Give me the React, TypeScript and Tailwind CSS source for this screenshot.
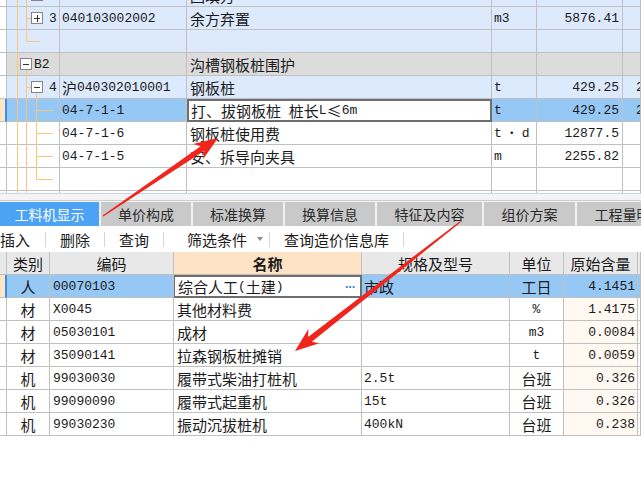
import React from "react";

const MONO = "font-['Liberation_Mono',monospace] text-[13px]";

function Txt({ s }: { s: string }) {
  const parts = s.split(/([\x20-\x7e]+)/).filter(Boolean);
  return (
    <>
      {parts.map((p, i) =>
        /^[\x20-\x7e]+$/.test(p) ? (
          <span key={i} className={`${MONO} whitespace-pre`}>
            {p}
          </span>
        ) : (
          <span key={i} className="text-[15px]">
            {p}
          </span>
        )
      )}
    </>
  );
}

type TreeProps = {
  lines: number[];
  half?: number;
  down?: number;
  hl?: [number, number];
  box?: { x: number; plus: boolean };
};

function Tree({ lines, half, down, hl, box }: TreeProps) {
  const o = "#fbc57a";
  return (
    <svg width="52" height="23" className="absolute left-0 top-0" shapeRendering="crispEdges">
      <line x1="0" y1="22.5" x2="52" y2="22.5" stroke="#c0c0c0" />
      {lines.map((x) => (
        <line key={x} x1={x} y1="0" x2={x} y2="23" stroke={o} />
      ))}
      {half !== undefined && <line x1={half} y1="0" x2={half} y2="11.5" stroke={o} />}
      {down !== undefined && <line x1={down} y1="16" x2={down} y2="23" stroke={o} />}
      {hl && <line x1={hl[0]} y1="11.5" x2={hl[1]} y2="11.5" stroke={o} />}
      {box && (
        <g>
          <rect x={box.x} y="5.5" width="11" height="11" fill="#fff" stroke="#858585" />
          <line x1={box.x + 2.5} y1="11.5" x2={box.x + 8.5} y2="11.5" stroke="#333" />
          {box.plus && <line x1={box.x + 5.5} y1="8" x2={box.x + 5.5} y2="15" stroke="#333" />}
        </g>
      )}
    </svg>
  );
}

type TopRowData = {
  bg: string;
  tree: TreeProps;
  label?: string;
  labelX?: string;
  code?: string;
  name?: string;
  unit?: React.ReactNode;
  qty?: string;
  extra?: string;
  sel?: boolean;
};

const BLUE = "bg-[#dde9fc]";
const topRows: TopRowData[] = [
  { bg: BLUE, tree: { lines: [10.5, 19.5], hl: [19.5, 24], box: { x: 24.5, plus: true } }, name: "回填方" },
  { bg: BLUE, tree: { lines: [10.5, 19.5], hl: [19.5, 24], box: { x: 24.5, plus: true } }, label: "3", labelX: "left-[42px]", code: "040103002002", name: "余方弃置", unit: <Txt s="m3" />, qty: "5876.41" },
  { bg: BLUE, tree: { lines: [10.5], half: 19.5, hl: [19.5, 33] } },
  { bg: "bg-[#dcdcdc]", tree: { lines: [10.5], hl: [10.5, 13.5], box: { x: 13.5, plus: false }, down: 19.5 }, label: "B2", labelX: "left-[27px]", name: "沟槽钢板桩围护" },
  { bg: BLUE, tree: { lines: [10.5, 19.5], hl: [19.5, 24], box: { x: 24.5, plus: false }, down: 29.5 }, label: "4", labelX: "left-[42px]", code: "沪040302010001", name: "钢板桩", unit: <Txt s="t" />, qty: "429.25", extra: "2" },
  { bg: "bg-[#96c8f5]", sel: true, tree: { lines: [10.5, 19.5, 29.5], hl: [29.5, 46] }, code: "04-7-1-1", name: "打、拔钢板桩 桩长L≤6m", unit: <Txt s="t" />, qty: "429.25", extra: "2" },
  { bg: "bg-white", tree: { lines: [10.5, 19.5, 29.5], hl: [29.5, 46] }, code: "04-7-1-6", name: "钢板桩使用费", unit: (<><span className={MONO}>t</span><span className="px-[4px] text-[12px]">·</span><span className={MONO}>d</span></>), qty: "12877.5" },
  { bg: "bg-white", tree: { lines: [10.5, 19.5, 29.5], hl: [29.5, 46] }, code: "04-7-1-5", name: "安、拆导向夹具", unit: <Txt s="m" />, qty: "2255.82" },
  { bg: "bg-white", tree: { lines: [10.5, 19.5], half: 29.5, hl: [29.5, 46] } },
  { bg: "bg-white", tree: { lines: [10.5, 19.5] } },
];

function TopRow({ r }: { r: TopRowData }) {
  const cell = "flex items-center overflow-hidden whitespace-nowrap border-r border-b border-[#c0c0c0]";
  return (
    <div className={`grid h-[23px] grid-cols-[7px_53px_127px_305px_45px_86px_1fr] ${r.bg}`}>
      <div className={r.sel ? "border-b border-r-2 border-[#c0c0c0] border-r-[#3b8ee5] bg-[#fde5c6]" : "border-b border-r border-[#c0c0c0] bg-white"} />
      <div className="relative border-r border-[#c0c0c0]">
        <Tree {...r.tree} />
        {r.label && (
          <span className={`absolute top-0 flex h-[22px] items-center ${r.labelX} ${MONO}`}>{r.label}</span>
        )}
      </div>
      <div className={`${cell} pl-[2px]`}>{r.code && <Txt s={r.code} />}</div>
      {r.sel ? (
        <div className="flex items-center overflow-hidden whitespace-nowrap border-2 border-[#6e6e6e] bg-white pl-[2px]">
          <Txt s={r.name ?? ""} />
        </div>
      ) : (
        <div className={`${cell} pl-[3px]`}>{r.name && <Txt s={r.name} />}</div>
      )}
      <div className={`${cell} pl-[2px]`}>{r.unit}</div>
      <div className={`${cell} justify-end pr-[3px]`}>{r.qty && <span className={MONO}>{r.qty}</span>}</div>
      <div className={`${cell} pl-[13px]`}>{r.extra && <span className={MONO}>{r.extra}</span>}</div>
    </div>
  );
}

const tabs = [
  { t: "工料机显示", w: "w-[99px]" },
  { t: "单价构成", w: "w-[90px]" },
  { t: "标准换算", w: "w-[90px]" },
  { t: "换算信息", w: "w-[90px]" },
  { t: "特征及内容", w: "w-[105px]" },
  { t: "组价方案", w: "w-[91px]" },
  { t: "工程量明细", w: "w-[105px]" },
];

function Tabs() {
  return (
    <div className="flex h-[24px] gap-[2px] overflow-hidden bg-[#f0f0f0]">
      {tabs.map((tab, i) => (
        <div
          key={tab.t}
          className={`flex shrink-0 items-center justify-center text-[14px] ${tab.w} ${
            i === 0 ? "bg-[#4ca2f4] text-white" : "bg-[#c9c9c9] text-[#2a2a2a]"
          }`}
        >
          {tab.t}
        </div>
      ))}
    </div>
  );
}

function Sep() {
  return <div className="h-[15px] w-px bg-[#d4d4d4]" />;
}

function Toolbar() {
  return (
    <div className="flex h-[26px] items-center bg-white text-[15px] text-[#1a1a1a]">
      <span className="pr-[15px]">插入</span>
      <Sep />
      <span className="px-[14px]">删除</span>
      <Sep />
      <span className="px-[14px]">查询</span>
      <Sep />
      <span className="pl-[23px]">筛选条件</span>
      <span className="ml-[10px] mr-[6px] h-0 w-0 border-x-[3.5px] border-t-[4px] border-x-transparent border-t-[#8c8c8c]" />
      <Sep />
      <span className="px-[14px]">查询造价信息库</span>
      <Sep />
    </div>
  );
}

const bottomRows = [
  { k: "人", code: "00070103", name: "综合人工(土建)", spec: "市政", unit: "工日", q: "4.1451", sel: true },
  { k: "材", code: "X0045", name: "其他材料费", spec: "", unit: "%", q: "1.4175" },
  { k: "材", code: "05030101", name: "成材", spec: "", unit: "m3", q: "0.0084" },
  { k: "材", code: "35090141", name: "拉森钢板桩摊销", spec: "", unit: "t", q: "0.0059" },
  { k: "机", code: "99030030", name: "履带式柴油打桩机", spec: "2.5t", unit: "台班", q: "0.326" },
  { k: "机", code: "99090090", name: "履带式起重机", spec: "15t", unit: "台班", q: "0.326" },
  { k: "机", code: "99030230", name: "振动沉拔桩机", spec: "400kN", unit: "台班", q: "0.238" },
];

const BCOLS = "grid-cols-[7px_43px_124px_188px_148px_54px_74px_1fr]";

function BottomTable() {
  const h = "flex items-center justify-center border-r border-b border-[#c0c0c0] bg-[#e8e8e8] text-[15px]";
  const cell = "flex items-center overflow-hidden whitespace-nowrap border-r border-b border-[#c0c0c0]";
  return (
    <div>
      <div className={`grid h-[23px] ${BCOLS}`}>
        <div className={h} />
        <div className={h}>类别</div>
        <div className={h}>编码</div>
        <div className={`${h} bg-[#fde3c4] font-bold`}>名称</div>
        <div className={h}>规格及型号</div>
        <div className={h}>单位</div>
        <div className={h}>原始含量</div>
        <div className={h} />
      </div>
      {bottomRows.map((r) => {
        const bg = r.sel ? "bg-[#96c8f5]" : "bg-white";
        return (
          <div key={r.code} className={`grid h-[23px] ${BCOLS}`}>
            <div className={r.sel ? "border-b border-r-2 border-[#c0c0c0] border-r-[#3b8ee5] bg-[#fde5c6]" : "border-b border-r border-[#c0c0c0] bg-white"} />
            <div className={`${cell} ${bg} justify-center text-[15px]`}>{r.k}</div>
            <div className={`${cell} ${bg} pl-[3px]`}>
              <Txt s={r.code} />
            </div>
            {r.sel ? (
              <div className="flex items-center overflow-hidden whitespace-nowrap border-2 border-l border-[#6e6e6e] bg-white pl-[3px]">
                <Txt s={r.name} />
                <span className="ml-auto pr-[5px] font-['Liberation_Sans',sans-serif] text-[13px] font-bold leading-none tracking-[-1px] text-[#3a86d8]">···</span>
              </div>
            ) : (
              <div className={`${cell} ${bg} pl-[3px]`}>
                <Txt s={r.name} />
              </div>
            )}
            <div className={`${cell} ${bg} pl-[2px]`}>{r.spec && <Txt s={r.spec} />}</div>
            <div className={`${cell} ${bg} justify-center`}>
              <Txt s={r.unit} />
            </div>
            <div className={`${cell} ${r.sel ? bg : "bg-[#fff9f2]"} justify-end pr-[2px]`}>
              <span className={MONO}>{r.q}</span>
            </div>
            <div className={`${cell} ${bg}`} />
          </div>
        );
      })}
    </div>
  );
}

function arrowPts(tx: number, ty: number, px: number, py: number) {
  const dx = px - tx;
  const dy = py - ty;
  const L = Math.hypot(dx, dy);
  const ux = dx / L;
  const uy = dy / L;
  const nx = -uy;
  const ny = ux;
  const h = 24;
  const hw = 9;
  const sw = 3;
  const tw = 0.7;
  const bx = px - ux * h;
  const by = py - uy * h;
  const sx = px - ux * (h - 5);
  const sy = py - uy * (h - 5);
  return [
    [tx + nx * tw, ty + ny * tw],
    [sx + nx * sw, sy + ny * sw],
    [bx + nx * hw, by + ny * hw],
    [px, py],
    [bx - nx * hw, by - ny * hw],
    [sx - nx * sw, sy - ny * sw],
    [tx - nx * tw, ty - ny * tw],
  ]
    .map((p) => p.map((v) => v.toFixed(1)).join(","))
    .join(" ");
}

function Arrows() {
  return (
    <svg width="641" height="478" className="pointer-events-none absolute left-0 top-0">
      <polygon points={arrowPts(103, 216, 218, 138)} fill="#f1251b" />
      <polygon points={arrowPts(460, 222, 295, 351)} fill="#f1251b" />
    </svg>
  );
}

export default function App() {
  return (
    <div className="relative h-[478px] w-[641px] overflow-hidden bg-white font-['Noto_Sans_CJK_SC',sans-serif] leading-none text-[#1b1b1b]">
      <div className="h-[193px] overflow-hidden">
        <div className="-mt-[16px]">
          {topRows.map((r, i) => (
            <TopRow key={i} r={r} />
          ))}
        </div>
      </div>
      <div className="h-px bg-[#c6d6ee]" />
      <div className="h-[6px] bg-[#f4f4f4]" />
      <div className="h-px bg-[#cdcdcd]" />
      <div className="h-px bg-[#f4f4f4]" />
      <Tabs />
      <Toolbar />
      <BottomTable />
      <Arrows />
    </div>
  );
}
